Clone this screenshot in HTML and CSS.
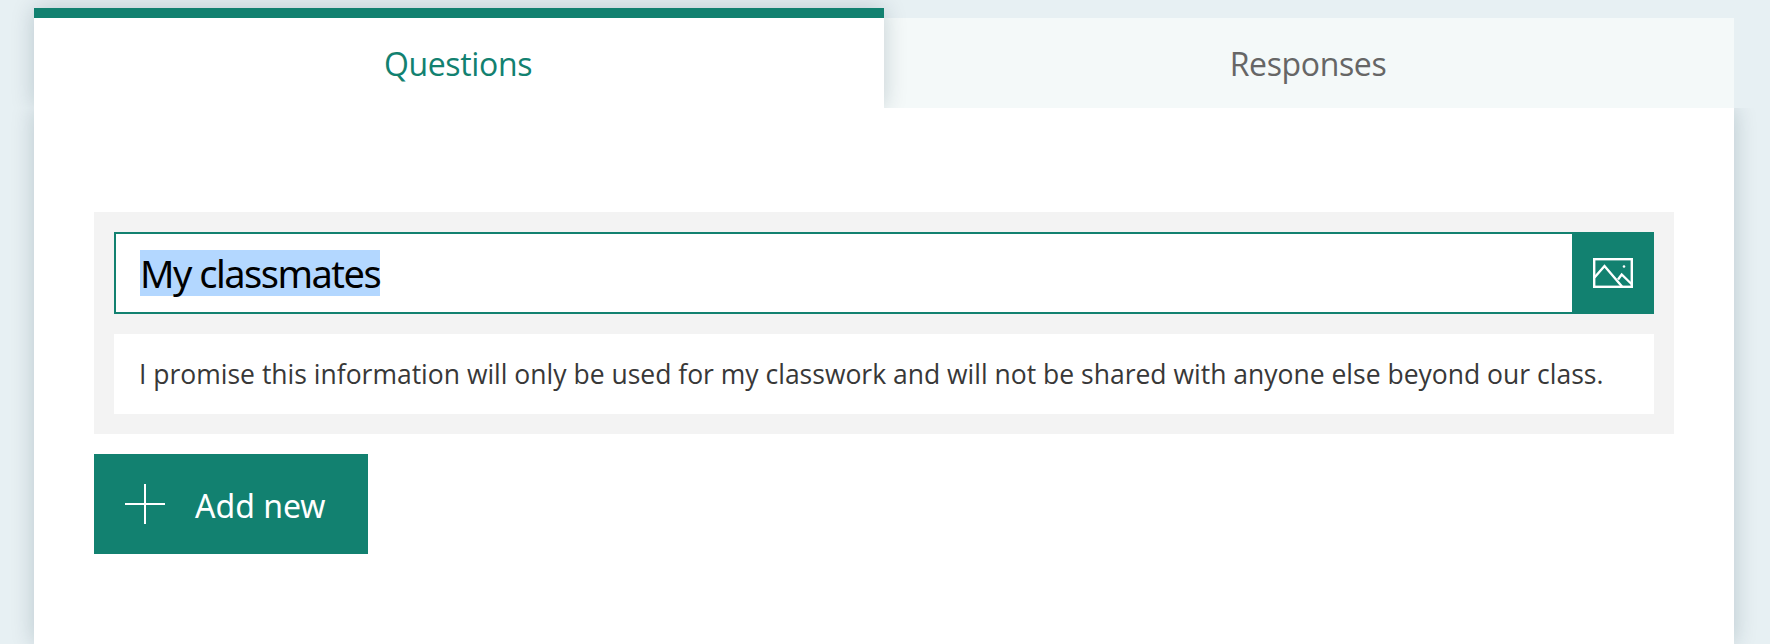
FILE: index.html
```html
<!DOCTYPE html>
<html lang="en">
<head>
<meta charset="utf-8">
<title>My classmates</title>
<link rel="stylesheet" href="styles.css">
</head>
<body>
<main class="shell">
  <nav class="tabs">
    <div class="tab tab-active">Questions</div>
    <div class="tab tab-idle">Responses</div>
  </nav>
  <section class="panel">
    <div class="form-head">
      <div class="title-row">
        <div class="title-field"><span class="title-sel">My classmates</span></div>
        <button class="image-btn" aria-label="Insert image">
          <svg class="image-icon" width="40" height="30" viewBox="0 0 40 30" fill="none" stroke="#fff" stroke-width="2.400">
            <rect x="1.200" y="1.200" width="37.600" height="27.600"/>
            <path d="M1.500 19.500 L11.500 8 L29 28.500"/>
            <path d="M25 21.500 L28.700 16.500 L38.500 26"/>
            <circle cx="31" cy="8.500" r="1.300" fill="#fff" stroke="none"/>
          </svg>
        </button>
      </div>
      <div class="desc">I promise this information will only be used for my classwork and will not be shared with anyone else beyond our class.</div>
    </div>
    <button class="add-btn">
      <svg class="plus" width="40" height="40" viewBox="0 0 40 40" stroke="#fff" stroke-width="2"><path d="M20 0V40M0 20H40"/></svg>
      <span class="add-label">Add new</span>
    </button>
  </section>
</main>
</body>
</html>
```
FILE: styles.css
```css
* { box-sizing: border-box; }
html, body { margin: 0; height: 100%; overflow: hidden; }
body { background: #e7f0f3; font-family: "Noto Sans", "Open Sans", sans-serif; }
.shell { width: 1700px; margin-left: 34px; padding-top: 8px; height: 644px; display: flex; flex-direction: column; }
.tabs { display: flex; align-items: flex-end; position: relative; z-index: 1; }
.tab { width: 850px; display: flex; align-items: center; justify-content: center; padding-right: 2px; font-size: 32px; letter-spacing: -0.35px; font-family: "Open Sans", sans-serif; }
.tab-active { height: 100px; background: #fff; color: #128170; border-top: 10px solid #128170; box-shadow: 0 0 22px rgba(0,40,60,.2); clip-path: inset(-30px -30px 0 -30px); position: relative; z-index: 2; }
.tab-idle { height: 90px; background: #f4f9f9; color: #666; }
.panel { flex: 1; background: #fff; padding: 104px 60px 0; box-shadow: 0 0 22px rgba(0,40,60,.2); clip-path: inset(0 -30px 0 -30px); }
.form-head { background: #f3f3f3; padding: 20px; display: flex; flex-direction: column; gap: 20px; }
.title-row { display: flex; height: 82px; }
.title-field { flex: 1; background: #fff; border: 2px solid #128170; border-right: 0; padding-left: 24px; display: flex; align-items: center; font-size: 38px; letter-spacing: -1.5px; color: #000; }
.title-sel { background: #b3d7ff; line-height: 46px; }
.image-btn { width: 82px; border: 0; padding: 0; background: #128170; display: flex; align-items: center; justify-content: center; }
.desc { height: 80px; background: #fff; padding-left: 25px; display: flex; align-items: center; font-family: "Open Sans", sans-serif; font-size: 26.500px; color: #383838; }
.add-btn { margin-top: 20px; width: 274px; height: 100px; border: 0; background: #128170; color: #fff; display: flex; align-items: center; padding: 0 0 0 31px; gap: 30px; font: inherit; font-size: 32px; }
.plus { flex: none; }
.add-label { padding-top: 3px; }
```
